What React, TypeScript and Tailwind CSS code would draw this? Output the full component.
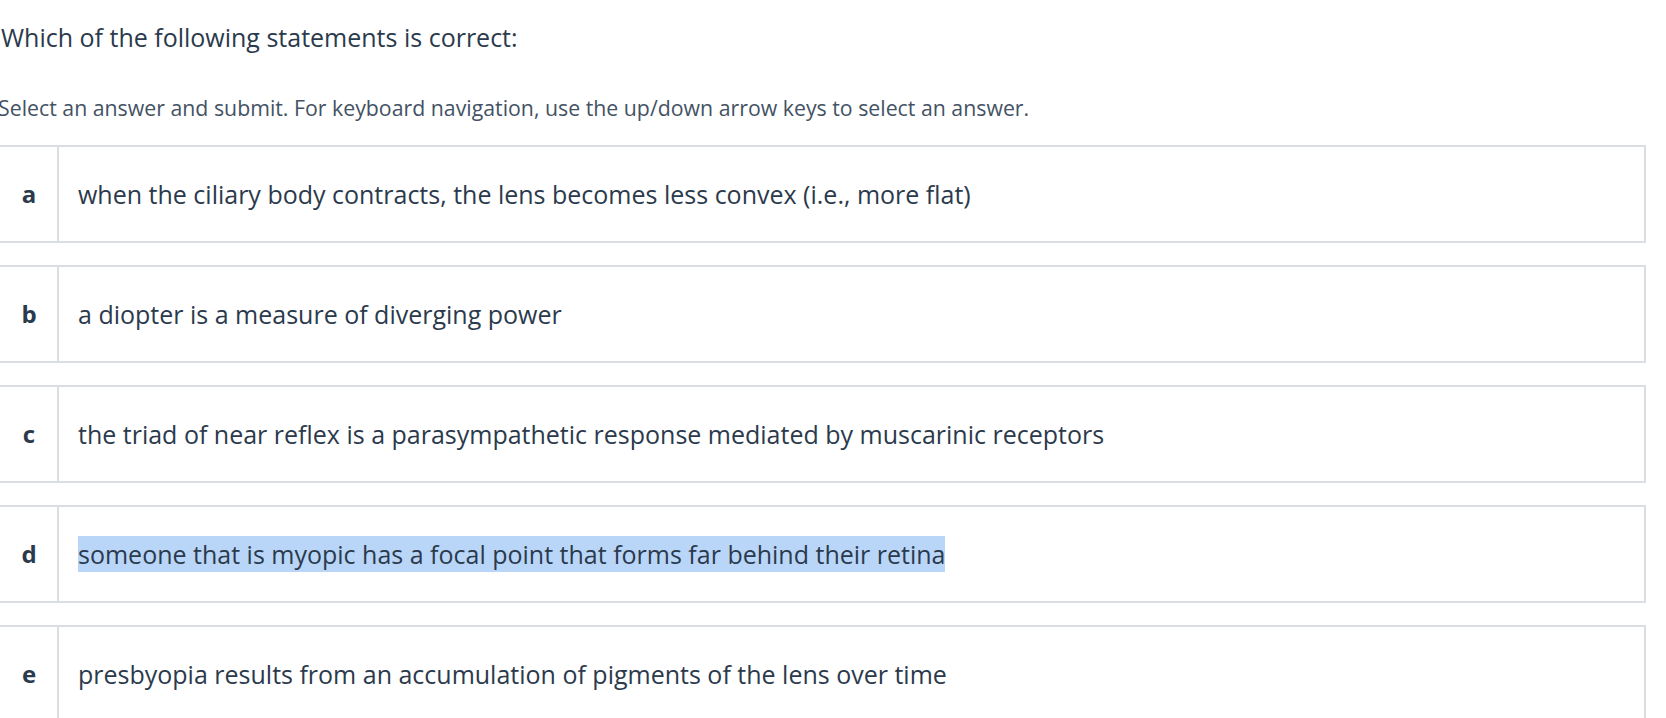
const answers = [
  { key: 'a', text: 'when the ciliary body contracts, the lens becomes less convex (i.e., more flat)' },
  { key: 'b', text: 'a diopter is a measure of diverging power' },
  { key: 'c', text: 'the triad of near reflex is a parasympathetic response mediated by muscarinic receptors' },
  { key: 'd', text: 'someone that is myopic has a focal point that forms far behind their retina', highlighted: true },
  { key: 'e', text: 'presbyopia results from an accumulation of pigments of the lens over time' },
]

export default function App() {
  return (
    <div className="min-h-screen bg-white overflow-hidden font-['Open_Sans','Liberation_Sans',sans-serif] text-[#2b3a4c]">
      <div className="w-[1650px] -ml-[4px]">
        <h2 className="pt-[20px] pl-[5px] text-[25px] leading-[34px]">Which of the following statements is correct:</h2>
        <p className="mt-[40px] pl-[2px] text-[21.3px] leading-[28px] text-[#435264]">
          Select an answer and submit. For keyboard navigation, use the up/down arrow keys to select an answer.
        </p>
        <ul className="mt-[23px] flex flex-col gap-[22px]">
          {answers.map((a) => (
            <li key={a.key} className="flex h-[98px] border-2 border-[#dadee2] bg-white">
              <div className="w-[61px] flex items-center justify-center border-r-2 border-[#dadee2] font-bold text-[24px] pl-[3px]">
                {a.key}
              </div>
              <div className="flex items-center pl-[19px] text-[25px]">
                <span className={a.highlighted ? 'bg-[#b9d6f9] leading-[36px]' : 'leading-[36px]'}>{a.text}</span>
              </div>
            </li>
          ))}
        </ul>
      </div>
    </div>
  )
}
